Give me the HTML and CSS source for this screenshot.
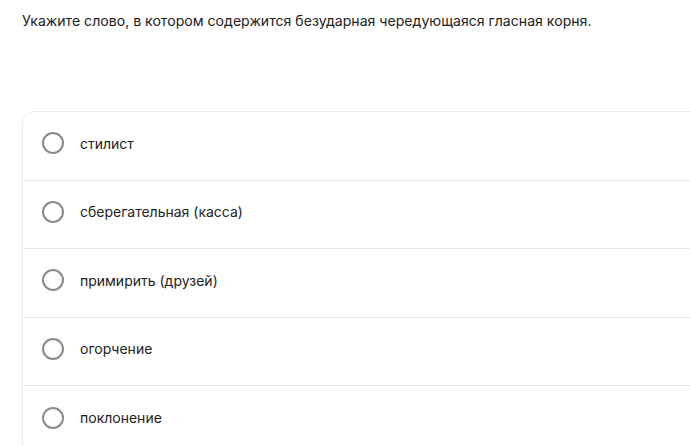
FILE: index.html
```html
<!DOCTYPE html>
<html lang="ru">
<head>
    <meta charset="UTF-8">
    <meta name="viewport" content="width=device-width, initial-scale=1.0">
    <title>Задание</title>
    <link rel="stylesheet" href="styles.css">
</head>
<body>
    <div class="task">
        <p class="question">Укажите слово, в котором содержится безударная чередующаяся гласная корня.</p>

        <div class="options">
            <label class="option">
                <span class="radio"></span>
                <span class="option-text">стилист</span>
            </label>
            <label class="option">
                <span class="radio"></span>
                <span class="option-text">сберегательная (касса)</span>
            </label>
            <label class="option">
                <span class="radio"></span>
                <span class="option-text">примирить (друзей)</span>
            </label>
            <label class="option">
                <span class="radio"></span>
                <span class="option-text">огорчение</span>
            </label>
            <label class="option">
                <span class="radio"></span>
                <span class="option-text">поклонение</span>
            </label>
        </div>
    </div>
</body>
</html>
```

FILE: styles.css
```css
body {
    font-family: Inter, "Noto Sans", sans-serif;
    margin: 0;
    padding: 0;
    background-color: #fff;
    color: #222;
    overflow: hidden;
}

.task {
    padding: 10px 0 0 22px;
}

.question {
    margin: 0;
    font-size: 14.1px;
    line-height: 22px;
    color: #222;
}

.options {
    margin-top: 79px;
    width: 720px;
    border: 1px solid #ebebeb;
    border-radius: 12px;
    background-color: #fff;
}

.option {
    display: flex;
    align-items: center;
    box-sizing: border-box;
    height: 68.5px;
    padding: 0 0 5px 19px;
    border-bottom: 1px solid #e6e6e6;
    cursor: pointer;
}

.option:last-child {
    border-bottom: none;
}

.radio {
    width: 18px;
    height: 18px;
    border: 2px solid #8a8a8a;
    border-radius: 50%;
    flex-shrink: 0;
}

.option-text {
    margin-left: 16px;
    font-size: 14px;
    color: #222;
}
```
